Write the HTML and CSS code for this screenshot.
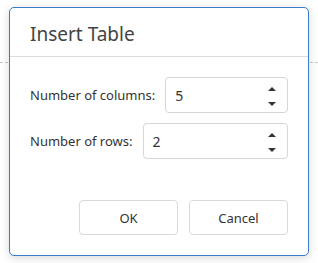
FILE: index.html
```html
<!DOCTYPE html>
<html lang="en">
<head>
  <meta charset="UTF-8" />
  <title>Insert Table</title>
  <link rel="stylesheet" href="styles.css">
</head>
<body>
  <div class="page">
    <div class="page-rule"></div>
  </div>

  <div class="dialog" role="dialog" aria-label="Insert Table">
    <div class="dialog-head">Insert Table</div>
    <div class="dialog-body">
      <div class="field">
        <label for="cols">Number of columns:</label>
        <div class="spin">
          <span class="spin-value" id="cols">5</span>
          <span class="spin-arrows">
            <span class="arrow up"></span>
            <span class="arrow down"></span>
          </span>
        </div>
      </div>
      <div class="field">
        <label for="rows">Number of rows:</label>
        <div class="spin">
          <span class="spin-value" id="rows">2</span>
          <span class="spin-arrows">
            <span class="arrow up"></span>
            <span class="arrow down"></span>
          </span>
        </div>
      </div>
    </div>
    <div class="dialog-foot">
      <button class="btn">OK</button>
      <button class="btn">Cancel</button>
    </div>
  </div>
</body>
</html>
```

FILE: styles.css
```css
body {
  margin: 0;
  background: #fff;
  font-family: 'Noto Sans', 'Open Sans', sans-serif;
  color: #333;
  width: 318px;
  height: 263px;
  overflow: hidden;
  position: relative;
}
.page {
  padding-top: 62px;
}
.page-rule {
  border-top: 1px dashed #c8c8c8;
}
.dialog {
  position: absolute;
  top: 7px;
  left: 9px;
  width: 298px;
  height: 247px;
  background: #fff;
  border: 1px solid #3a7bc8;
  border-radius: 5px;
  box-shadow: 0 2px 10px rgba(0, 0, 0, 0.15);
  display: flex;
  flex-direction: column;
}
.dialog-head {
  height: 49px;
  box-sizing: border-box;
  padding: 13px 0 0 20px;
  font-size: 19px;
  color: #444;
  border-bottom: 1px solid #dcdcdc;
}
.dialog-body {
  padding: 20px 20px 0 20px;
  display: flex;
  flex-direction: column;
  gap: 10px;
}
.field {
  display: flex;
  align-items: center;
  gap: 10px;
  font-size: 13px;
  color: #333;
}
.spin {
  flex: 1;
  height: 36px;
  box-sizing: border-box;
  border: 1px solid #d6d6d6;
  border-radius: 4px;
  display: flex;
  align-items: center;
  padding: 0 11px 0 9px;
}
.spin-value {
  flex: 1;
  font-size: 14px;
}
.spin-arrows {
  display: flex;
  flex-direction: column;
  gap: 11px;
  padding-top: 2px;
}
.arrow {
  width: 0;
  height: 0;
  border-left: 4px solid transparent;
  border-right: 4px solid transparent;
}
.arrow.up {
  border-bottom: 4px solid #333;
}
.arrow.down {
  border-top: 4px solid #333;
}
.dialog-foot {
  margin-top: auto;
  padding: 0 20px 20px 0;
  display: flex;
  justify-content: flex-end;
  gap: 11px;
}
.btn {
  width: 99px;
  height: 35px;
  background: #fff;
  border: 1px solid #d9d9d9;
  border-radius: 4px;
  font-family: inherit;
  font-size: 13px;
  color: #333;
}
```
